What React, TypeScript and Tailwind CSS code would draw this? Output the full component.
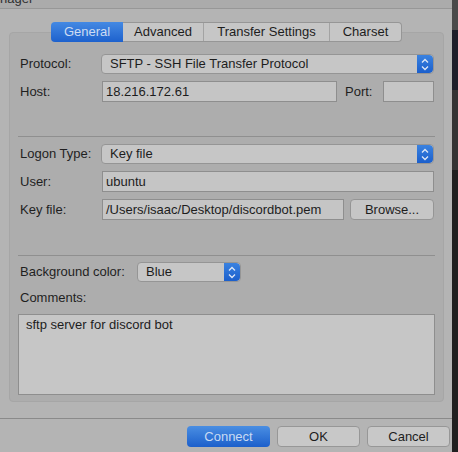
import React from "react";

const font = { fontFamily: '"Liberation Sans", Arial, sans-serif' };

function Stepper() {
  return (
    <div className="w-[16px] h-full bg-gradient-to-b from-[#3a82e0] to-[#1b5fcc] rounded-r-[4px] flex items-center justify-center">
      <svg width="8" height="13" viewBox="0 0 8 13" fill="none" stroke="#dfe8f6" strokeWidth="1.3">
        <path d="M1 4.5 L4 1.5 L7 4.5" />
        <path d="M1 8.5 L4 11.5 L7 8.5" />
      </svg>
    </div>
  );
}

function Select({ value, className }: { value: string; className: string }) {
  return (
    <div className={`flex h-[20px] rounded-[4px] border border-[#959595] bg-[#c6c6c6] overflow-hidden ${className}`}>
      <div className="flex-1 pl-[8px] text-[13px] leading-[18px] text-[#1d1d1d]">{value}</div>
      <Stepper />
    </div>
  );
}

function Input({ value, className }: { value?: string; className: string }) {
  return (
    <div className={`h-[21px] border border-[#8e8e8e] bg-[#c5c5c5] pl-[3px] text-[13px] leading-[19px] text-[#1d1d1d] ${className}`}>
      {value}
    </div>
  );
}

function Btn({ label, primary }: { label: string; primary?: boolean }) {
  return (
    <div
      className={
        primary
          ? "w-[83px] h-[21px] rounded-[4px] bg-gradient-to-b from-[#4a8ee2] to-[#1c5fcb] text-[#c9dbf3] text-[13px] leading-[21px] text-center"
          : "w-[83px] h-[21px] rounded-[4px] border border-[#979797] bg-[#c8c8c8] text-[#1d1d1d] text-[13px] leading-[19px] text-center"
      }
    >
      {label}
    </div>
  );
}

function Label({ text, className = "w-[83px]" }: { text: string; className?: string }) {
  return <div className={`pl-[2px] text-[13px] leading-[16px] text-[#1f1f1f] ${className}`}>{text}</div>;
}

export default function App() {
  return (
    <div className="w-[458px] h-[452px] flex bg-[#b4b4b4] overflow-hidden" style={font}>
      {/* window */}
      <div className="w-[452px] h-full flex flex-col">
        {/* title bar, cut off */}
        <div className="h-[9px] bg-[#ababab] border-b border-[#979797] overflow-hidden">
          <div className="-mt-[8px] text-[13px] leading-[14px] text-[#303030]">nager</div>
        </div>

        {/* tabs */}
        <div className="mt-[13px] ml-[51px] flex h-[20px] w-[351px] relative z-10">
          <div className="w-[72px] rounded-l-[4px] bg-gradient-to-b from-[#4489e3] to-[#1d61cd] text-[#cddcf2] text-[13px] leading-[20px] text-center">
            General
          </div>
          <div className="flex flex-1 rounded-r-[4px] border border-l-0 border-[#969696] bg-[#c6c6c6] text-[13px] leading-[18px] text-[#1d1d1d]">
            <div className="w-[81px] text-center border-r border-[#a3a3a3]">Advanced</div>
            <div className="w-[126px] text-center border-r border-[#a3a3a3]">Transfer Settings</div>
            <div className="flex-1 text-center">Charset</div>
          </div>
        </div>

        {/* group box */}
        <div className="-mt-[10px] mx-[9px] w-[435px] h-[370px] rounded-[4px] bg-[#adadad] border border-[#a6a6a6] px-[8px] pt-[21px] flex flex-col">
          <div className="flex items-center">
            <Label text="Protocol:" />
            <Select value="SFTP - SSH File Transfer Protocol" className="w-[333px]" />
          </div>
          <div className="flex items-center mt-[7px]">
            <Label text="Host:" className="w-[84px]" />
            <Input value="18.216.172.61" className="w-[235px]" />
            <div className="ml-[8px] w-[38px] text-[13px] text-[#1f1f1f]">Port:</div>
            <Input className="w-[51px]" />
          </div>

          <div className="mt-[34px] h-[1px] bg-[#8f8f8f]" />

          <div className="flex items-center mt-[7px]">
            <Label text="Logon Type:" />
            <Select value="Key file" className="w-[333px]" />
          </div>
          <div className="flex items-center mt-[7px]">
            <Label text="User:" className="w-[84px]" />
            <Input value="ubuntu" className="w-[332px]" />
          </div>
          <div className="flex items-center mt-[7px]">
            <Label text="Key file:" className="w-[84px]" />
            <Input value="/Users/isaac/Desktop/discordbot.pem" className="w-[242px]" />
            <div className="ml-[6px] w-[84px] h-[21px] rounded-[4px] border border-[#959595] bg-[#c6c6c6] text-[13px] leading-[19px] text-center text-[#1d1d1d]">
              Browse...
            </div>
          </div>

          <div className="mt-[35px] h-[1px] bg-[#8f8f8f]" />

          <div className="flex items-center mt-[6px]">
            <Label text="Background color:" className="w-[119px]" />
            <Select value="Blue" className="w-[104px]" />
          </div>
          <div className="mt-[8px] pl-[2px] text-[13px] leading-[16px] text-[#1f1f1f]">Comments:</div>
          <div className="mt-[8px] h-[81px] border border-[#8e8e8e] bg-[#c6c6c6] px-[7px] pt-[2px] text-[13px] leading-[16px] text-[#1d1d1d]">
            sftp server for discord bot
          </div>
        </div>

        {/* footer */}
        <div className="mt-[16px] h-[1px] bg-[#8a8a8a]" />
        <div className="mt-[7px] flex justify-end gap-[7px] pr-[2px]">
          <Btn label="Connect" primary />
          <Btn label="OK" />
          <Btn label="Cancel" />
        </div>
      </div>

      {/* desktop strip */}
      <div className="w-[6px] h-full bg-[#2a2a2a] flex flex-col">
        <div className="h-[30px] bg-[#4a4a4a]" />
        <div className="h-[60px] bg-[#1e1e2a]" />
        <div className="h-[80px] bg-[#343434]" />
        <div className="flex-1 bg-[#202020]" />
      </div>
    </div>
  );
}
